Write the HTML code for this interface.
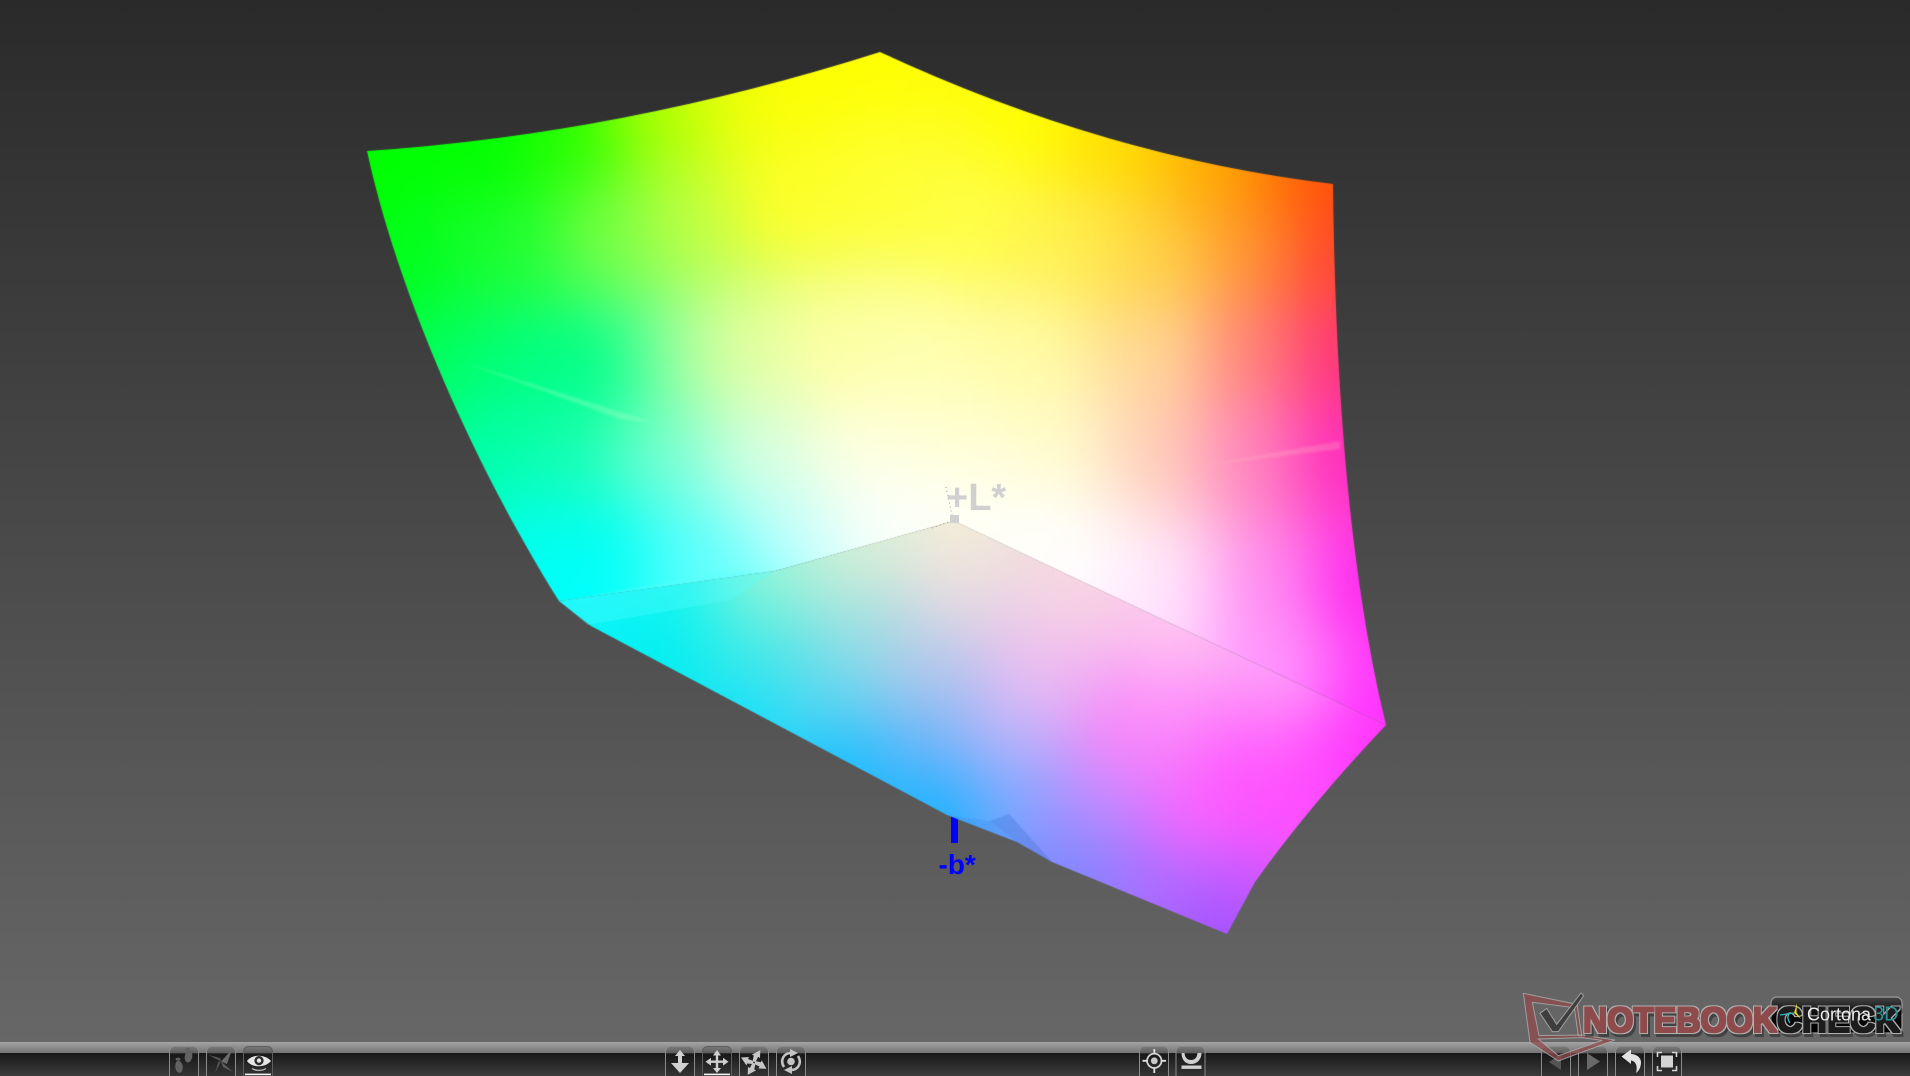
<!DOCTYPE html>
<html>
<head>
<meta charset="utf-8">
<style>
html,body{margin:0;padding:0;width:1910px;height:1076px;overflow:hidden;background:#444}
#bg{position:absolute;left:0;top:0;width:1910px;height:1076px;background:linear-gradient(to bottom,#2a2a2a 0,#676767 1042px)}
#c{position:absolute;left:0;top:0}
svg{position:absolute;left:0;top:0}
text{font-family:"Liberation Sans",sans-serif}
</style>
</head>
<body>
<div id="bg"></div>
<svg width="1910" height="1076" style="z-index:0"><rect x="951" y="815" width="7" height="28" fill="#0000ff"/></svg>
<canvas id="c" width="1910" height="1076" style="z-index:1"></canvas>
<svg width="1910" height="1076" viewBox="0 0 1910 1076" style="z-index:2">
<defs>
<linearGradient id="tb" x1="0" y1="0" x2="0" y2="1"><stop offset="0" stop-color="#a4a4a4"/><stop offset="1" stop-color="#747474"/></linearGradient>
<linearGradient id="td" x1="0" y1="0" x2="0" y2="1"><stop offset="0" stop-color="#181818"/><stop offset="1" stop-color="#3c3c3c"/></linearGradient>
<linearGradient id="bt" gradientUnits="userSpaceOnUse" x1="0" y1="0" x2="0" y2="30">
<stop offset="0" stop-color="#7c7c7c"/><stop offset=".24" stop-color="#5c5c5c"/><stop offset=".245" stop-color="#171717"/><stop offset="1" stop-color="#343434"/></linearGradient>
<linearGradient id="pn" x1="0" y1="0" x2="0" y2="1"><stop offset="0" stop-color="#454545"/><stop offset=".45" stop-color="#0c0c0c"/><stop offset="1" stop-color="#000"/></linearGradient>
<g id="b"><rect x=".5" y=".5" width="29" height="36" rx="5" fill="url(#bt)" stroke="#8c8c8c"/></g>
<g id="ba"><rect x=".5" y=".5" width="29" height="36" rx="5" fill="url(#bt)" stroke="#5e5e5e"/><rect x="2" y="27.6" width="26" height="1.6" fill="#f2f2f2"/></g>
<filter id="ol" x="-6%" y="-25%" width="112%" height="160%" color-interpolation-filters="sRGB">
<feMorphology in="SourceAlpha" operator="dilate" radius="2" result="o"/>
<feFlood flood-color="#b0b0b0"/><feComposite in2="o" operator="in" result="gray"/>
<feOffset in="o" dx="2" dy="3" result="so"/>
<feFlood flood-color="#000" flood-opacity=".35"/><feComposite in2="so" operator="in" result="shadow"/>
<feMorphology in="SourceGraphic" operator="dilate" radius=".8" result="body"/>
<feMerge><feMergeNode in="shadow"/><feMergeNode in="gray"/><feMergeNode in="body"/></feMerge>
</filter>
</defs>

<!-- axis labels -->
<rect x="950" y="515" width="9" height="8" fill="#d0d0d0"/>
<path d="M946 487L952 515" stroke="#999" stroke-width="1" stroke-dasharray="1 3" fill="none"/>
<path d="M932 528L948 522" stroke="#999" stroke-width="1" stroke-dasharray="1 3" fill="none"/>
<text x="946" y="510" font-size="38" font-weight="bold" fill="#d0d0d0">+L*</text>
<text x="938.5" y="874" font-size="28" font-weight="bold" fill="#0000ff">-b*</text>

<!-- toolbar -->
<rect x="0" y="1042" width="1910" height="11" fill="url(#tb)"/>
<rect x="0" y="1053" width="1910" height="23" fill="url(#td)"/>

<!-- footprints -->
<g transform="translate(169,1046)"><use href="#b"/>
<g fill="#626262"><ellipse cx="10" cy="20.8" rx="3.8" ry="6" transform="rotate(-8 10 20.8)"/><ellipse cx="9" cy="13.2" rx="2.4" ry="1.4"/><ellipse cx="19.5" cy="10.5" rx="3.8" ry="6" transform="rotate(8 19.5 10.5)"/><ellipse cx="18.6" cy="3" rx="2.4" ry="1.4"/></g></g>
<!-- plane -->
<g transform="translate(206,1046)"><use href="#b"/>
<path d="M15 15.5L26 3.5L21 18Z" fill="#6a6a6a"/><path d="M15 15.5L2.5 9L14 12Z" fill="#555"/><path d="M15 15.5L9 27.5L12 16Z" fill="#505050"/><path d="M15 15.5L27 26L17 21Z" fill="#5e5e5e"/></g>
<!-- eye -->
<g transform="translate(243,1046)"><use href="#ba"/>
<path d="M4 15C9 8 22 8 28 15C22 22 9 22 4 15Z" fill="#e6e6e6"/><circle cx="16" cy="14.6" r="4.6" fill="#2a2a2a"/><circle cx="16" cy="14.6" r="2.2" fill="#e6e6e6"/><path d="M9 22.5C13 25 19 25 23 22.5" stroke="#bbb" stroke-width="1.3" fill="none"/></g>

<!-- up/down -->
<g transform="translate(665,1046)"><use href="#b"/>
<path d="M15 4L20 10H17V17H24L15 27L6 17H13V10H10Z" fill="#d2d2d2"/></g>
<!-- pan -->
<g transform="translate(702,1046)"><use href="#ba"/>
<path d="M15 4L19 9.5H16.2V14.5H21V11.8L26.5 15.7L21 19.6V16.9H16.2V22H19L15 27L11 22H13.8V16.9H9V19.6L3.5 15.7L9 11.8V14.5H13.8V9.5H11Z" fill="#cfcfcf"/></g>
<!-- tilt -->
<g transform="translate(739,1046)"><use href="#b"/>
<g transform="translate(15,16.5)" fill="#c6c6c6">
<path d="M-1.5 -1L-1 -7L-3 -7.5L5 -13L5.5 -5L3.5 -6L1.5 -0.5Z" transform="rotate(6)"/>
<path d="M-1.5 -1L-1 -7L-3 -7.5L5 -13L5.5 -5L3.5 -6L1.5 -0.5Z" transform="rotate(96)"/>
<path d="M-1.5 -1L-1 -7L-3 -7.5L5 -13L5.5 -5L3.5 -6L1.5 -0.5Z" transform="rotate(186)"/>
<path d="M-1.5 -1L-1 -7L-3 -7.5L5 -13L5.5 -5L3.5 -6L1.5 -0.5Z" transform="rotate(270)"/>
</g></g>
<!-- rotate -->
<g transform="translate(776,1046)"><use href="#b"/>
<g fill="none" stroke="#c4c4c4" stroke-width="2.6"><path d="M8 21C3.5 14 8 7 15 7"/><path d="M22 10C26.5 17 22 24 15 24"/></g>
<path d="M14 3L22 7L14 11Z" fill="#c4c4c4"/><path d="M16 20L8 24L16 28Z" fill="#c4c4c4"/><circle cx="15" cy="15.5" r="3.8" fill="#c4c4c4"/></g>

<!-- target -->
<g transform="translate(1139,1046)"><use href="#b"/>
<circle cx="15.3" cy="14.8" r="7.2" fill="none" stroke="#d2d2d2" stroke-width="1.8"/><circle cx="15.3" cy="14.8" r="3.4" fill="#c8c8c8"/>
<path d="M15.3 3V8M15.3 21.5V27M3.5 14.8H8.5M22 14.8H27" stroke="#e0e0e0" stroke-width="1.8"/></g>
<!-- dock -->
<g transform="translate(1175.5,1046)"><use href="#b"/>
<path d="M6 7H9C9.5 12 12 14 15.5 14C19 14 21.5 12 22 7H26C26 14 21 18 15.5 18C10 18 6 14 6 7Z" fill="#cfcfcf"/><rect x="6" y="19.5" width="20" height="3.4" fill="#cfcfcf"/></g>

<!-- prev / next -->
<g transform="translate(1541,1046)"><use href="#b"/><path d="M8 16L20 8V24Z" fill="#555"/></g>
<g transform="translate(1578,1046)"><use href="#b"/><path d="M9 7L22 15.5L9 24Z" fill="#6a6a6a"/></g>
<!-- undo -->
<g transform="translate(1615,1046)"><use href="#b"/>
<path d="M6.5 10.5L16 3.5V8C24 8.5 27.5 14 25.5 20C25 23 23 25.5 21 27C22.5 22 22 15.5 16 14.5V18Z" fill="#e2e2e2"/></g>
<!-- fullscreen -->
<g transform="translate(1652,1046)"><use href="#b"/>
<rect x="9" y="9.5" width="12" height="12" fill="#d4d4d4"/>
<path d="M5.5 11V6.5H10M20 6.5H24.5V11M24.5 20V24.5H20M10 24.5H5.5V20" fill="none" stroke="#d4d4d4" stroke-width="1.6"/></g>

<!-- Cortona panel -->
<rect x="1771" y="997" width="131" height="36" rx="6" fill="url(#pn)" stroke="#9a9a9a" stroke-width="1.2"/>

<!-- Notebookcheck logo -->
<g transform="translate(1515,985) scale(.33333)" opacity=".88">
<path d="M25 25L186 58L200 152L190 152L178 68L52 52L72 152L200 150L300 165L130 228L45 172Z M70 162L130 212L262 166L202 158Z" fill="#8f4a4c" fill-rule="evenodd" stroke="#a8a8a8" stroke-width="3" fill-opacity=".85"/>
<path d="M75 85L95 70L125 118L198 24L206 32L130 140L112 140Z" fill="#3a3a3a" stroke="#a8a8a8" stroke-width="3"/>
</g>
<g font-weight="bold" font-size="35" filter="url(#ol)">
<text x="1583" y="1032" textLength="194" lengthAdjust="spacingAndGlyphs" fill="#8f4a4c">NOTEBOOK</text>
<text x="1777" y="1032" textLength="123" lengthAdjust="spacingAndGlyphs" fill="#1c1c1c">CHECK</text>
</g>

<!-- Cortona text on top -->
<path d="M1797 1003L1794 1013L1801 1019L1796.5 1012.5Z" fill="#e8e020"/>
<path d="M1794 1013L1780 1015" stroke="#30b8c0" stroke-width="1.2"/>
<path d="M1789 1014C1787 1017 1788 1021 1790 1023" fill="none" stroke="#30b8c0" stroke-width="1.4"/>
<text x="1807" y="1020.5" font-size="18" fill="#ececec">Cortona</text>
<text x="1873" y="1020.5" font-size="20" fill="#2a9196">3D</text>
</svg>

<script>
(function(){
var S=1910/1568;
var up=[
[305,127,0,255,0],[400,120,0,255,0],[470,115,40,255,0],[540,95,170,255,0],[600,80,235,255,10],[640,70,255,255,0],[722,45,255,255,0],[850,90,255,255,0],[920,115,255,220,0],[1000,135,255,170,0],[1060,148,255,110,0],[1092,153,255,70,15],
[330,220,0,255,30],[420,200,30,255,50],[500,190,120,255,70],[560,180,190,255,70],[640,160,255,255,40],[720,150,255,255,50],[800,180,255,255,70],[880,200,255,240,80],[950,210,255,210,70],[1030,200,255,150,50],[1090,210,255,70,50],
[360,300,0,255,100],[440,300,0,255,130],[500,300,0,255,140],[540,295,140,255,160],[600,290,225,255,160],[680,290,255,255,165],[760,290,255,255,175],[850,290,255,252,165],[950,290,255,215,150],[1030,290,255,130,120],[1095,290,255,50,120],
[395,370,0,255,170],[470,370,20,255,180],[540,370,120,255,210],[620,370,215,255,225],[700,370,255,255,225],[780,370,255,255,215],[870,370,255,252,205],[950,370,255,205,185],[1030,370,255,130,190],[1100,370,255,40,190],
[440,450,0,255,240],[500,450,0,255,245],[560,450,90,255,255],[640,440,195,255,255],[720,425,250,255,252],[780,415,255,255,250],[860,435,255,255,252],[950,470,255,232,250],[1040,480,255,140,240],[1115,480,255,40,240],
[470,495,0,255,255],[600,470,100,255,250],[1135,590,255,50,255],[1040,540,255,150,255],[950,505,255,225,255],[890,465,255,254,255],[783,428,255,255,245]
];
var lo=[
[783,432,245,240,215],[700,455,215,240,215],[630,472,150,245,215],[550,490,20,245,240],[480,508,10,245,250],
[540,540,0,238,240],[620,530,70,235,230],[700,510,160,225,225],[783,480,235,220,225],[880,480,248,215,225],[960,520,255,200,240],[1050,560,255,160,250],[1132,596,255,50,250],
[610,590,20,225,250],[680,570,100,215,240],[760,550,180,200,235],[850,550,240,190,240],[950,570,255,150,250],[1050,600,255,110,250],
[690,630,20,190,255],[760,610,110,180,250],[830,600,195,180,250],[920,610,250,130,250],[1030,640,255,80,255],[1100,620,255,60,255],
[770,665,20,180,255],[830,650,130,170,255],[900,660,190,140,255],[980,670,255,100,255],[1050,680,255,80,255],
[880,710,125,135,255],[950,720,170,110,255],[1020,730,190,90,255],[1005,765,160,80,255]
];
function build(pts){
  var x0=240,y0=-60,w=1280,h=1100,k=2,cw=Math.ceil(w/k),ch=Math.ceil(h/k);
  var o=document.createElement('canvas');o.width=cw;o.height=ch;
  var g=o.getContext('2d'),im=g.createImageData(cw,ch),d=im.data,n=pts.length,i=0;
  var P=pts.map(function(p){return [p[0]*S,p[1]*S,p[2],p[3],p[4]];});
  for(var y=0;y<ch;y++){var py=y0+y*k;
    for(var x=0;x<cw;x++){var px=x0+x*k,r=0,gg=0,b=0,t=0;
      for(var j=0;j<n;j++){var q=P[j],dx=px-q[0],dy=py-q[1],e=dx*dx+dy*dy+30,wt=1/(e*e);
        t+=wt;r+=wt*q[2];gg+=wt*q[3];b+=wt*q[4];}
      d[i++]=r/t;d[i++]=gg/t;d[i++]=b/t;d[i++]=255;}
  }
  g.putImageData(im,0,0);
  var o2=document.createElement('canvas');o2.width=cw;o2.height=ch;
  var g2=o2.getContext('2d');g2.filter='blur(15px)';g2.drawImage(o,0,0);
  return {c:o2,x:x0,y:y0,w:cw*k,h:ch*k};
}
var ctx=document.getElementById('c').getContext('2d');
ctx.imageSmoothingEnabled=true;
function paint(o,path){ctx.save();ctx.beginPath();path();ctx.closePath();ctx.clip();ctx.drawImage(o.c,o.x,o.y,o.w,o.h);ctx.restore();}
function poly(p,col,bl){ctx.save();if(bl)ctx.filter='blur('+bl+'px)';ctx.fillStyle=col;ctx.beginPath();ctx.moveTo(p[0],p[1]);for(var i=2;i<p.length;i+=2)ctx.lineTo(p[i],p[i+1]);ctx.closePath();ctx.fill();ctx.restore();}
var L=build(lo),U=build(up);
paint(L,function(){ctx.moveTo(954,521);ctx.lineTo(775,571);ctx.lineTo(559,601);ctx.lineTo(591,626);ctx.lineTo(947,815);ctx.lineTo(1017,842);ctx.lineTo(1052,862);ctx.lineTo(1227,934);ctx.lineTo(1255,882);ctx.quadraticCurveTo(1310,805,1386,725);});
paint(U,function(){ctx.moveTo(367,151);ctx.quadraticCurveTo(622,134,880,52);ctx.quadraticCurveTo(1106,157,1333,184);ctx.bezierCurveTo(1335,360,1346,560,1386,725);ctx.lineTo(954,521);ctx.lineTo(775,571);ctx.lineTo(559,601);ctx.bezierCurveTo(465,450,395,280,367,151);});
poly([559,601,588,625,732,600,775,571,712,574],'rgba(90,255,255,.3)');
poly([463,362,652,422,620,419],'rgba(180,255,205,.3)',1.2);
poly([1200,466,1340,441,1340,449],'rgba(255,205,205,.22)',1.2);
poly([947,815,990,821,1017,842],'rgba(60,130,230,.25)');
poly([990,821,1009,814,1052,862,1017,842],'rgba(60,110,210,.3)');
})();
</script>
</body>
</html>
